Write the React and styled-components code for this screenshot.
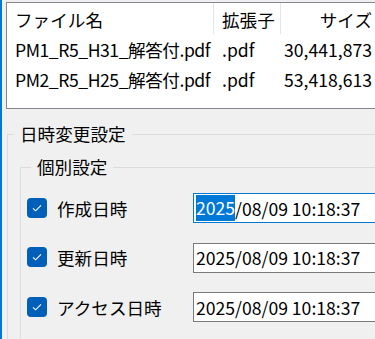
import styled, { createGlobalStyle } from 'styled-components'

const GlobalStyle = createGlobalStyle`
  html, body {
    margin: 0;
    padding: 0;
    background: #f0f0f0;
    overflow: hidden;
  }
  body {
    font-family: "Noto Sans CJK JP", "Noto Sans", sans-serif;
    font-size: 17.6px;
    color: #000;
  }
`

const Window = styled.div`
  display: flex;
  width: 375px;
  height: 339px;
  overflow: hidden;
`

const AccentEdge = styled.div`
  width: 2px;
  flex-shrink: 0;
  background: #0078d7;
`

const Main = styled.div`
  flex-shrink: 0;
  width: 430px;
  padding: 2px 0 0 4px;
`

const ListBox = styled.div`
  box-sizing: border-box;
  width: 420px;
  height: 107px;
  background: #fff;
  border: 1px solid #828790;
`

const Columns = styled.div`
  display: grid;
  grid-template-columns: 207px 67px 100px;
  height: ${p => p.$header ? 31 : 30}px;
`

const Cell = styled.div`
  display: flex;
  align-items: center;
  justify-content: ${p => p.$right ? 'flex-end' : 'flex-start'};
  padding: ${p => p.$header ? '2px' : '0'} ${p => p.$right ? '8px' : '0'} 0 8px;
  white-space: nowrap;
  letter-spacing: ${p => p.$tight ? '-0.45px' : 'normal'};
  border-right: 1px solid ${p => p.$divider ? '#e5e5e5' : 'transparent'};
`

const GroupBox = styled.fieldset`
  box-sizing: border-box;
  margin: ${p => p.$inner ? '7px 0 0 12px' : '12px 0 0 1px'};
  padding: ${p => p.$inner ? '13px 0 40px 6px' : '0'};
  width: ${p => p.$inner ? '400px' : '420px'};
  border: 1px solid #dcdcdc;
  min-width: 0;
`

const GroupTitle = styled.legend`
  margin-left: ${p => p.$inner ? '4px' : '6px'};
  padding: 0 6px;
  line-height: 26px;
`

const FieldList = styled.div`
  display: flex;
  flex-direction: column;
  gap: 19.5px;
`

const FieldRow = styled.div`
  display: flex;
  align-items: center;
  height: 30px;
`

const CheckBox = styled.span`
  box-sizing: border-box;
  width: 20px;
  height: 20px;
  border-radius: 4px;
  background: #005fb8;
  display: flex;
  align-items: center;
  justify-content: center;
  flex-shrink: 0;
  margin-top: -1px;
`

const FieldLabel = styled.span`
  width: 136px;
  padding-left: 10px;
  flex-shrink: 0;
  white-space: nowrap;
`

const DateBox = styled.div`
  box-sizing: border-box;
  width: 200px;
  height: 30px;
  padding: 0 2px;
  display: flex;
  align-items: center;
  background: #fff;
  border: 1px solid ${p => p.$focused ? '#0078d7' : '#7a7a7a'};
  white-space: nowrap;
`

const Selected = styled.span`
  background: #0078d7;
  color: #fff;
  line-height: 26px;
`

const files = [
  { name: 'PM1_R5_H31_解答付.pdf', ext: '.pdf', size: '30,441,873' },
  { name: 'PM2_R5_H25_解答付.pdf', ext: '.pdf', size: '53,418,613' },
]

const fields = ['作成日時', '更新日時', 'アクセス日時']

function Check() {
  return (
    <svg width="12" height="10" viewBox="0 0 12 10">
      <path d="M2 5.3 L4.6 7.8 L10 2.4" fill="none" stroke="#fff" strokeWidth="1.1" />
    </svg>
  )
}

export default function App() {
  return (
    <>
      <GlobalStyle />
      <Window>
        <AccentEdge />
        <Main>
          <ListBox>
            <Columns $header>
              <Cell $header $divider>ファイル名</Cell>
              <Cell $header $divider>拡張子</Cell>
              <Cell $header $right>サイズ</Cell>
            </Columns>
            {files.map(f => (
              <Columns key={f.name}>
                <Cell $tight>{f.name}</Cell>
                <Cell>{f.ext}</Cell>
                <Cell $right>{f.size}</Cell>
              </Columns>
            ))}
          </ListBox>

          <GroupBox>
            <GroupTitle>日時変更設定</GroupTitle>
            <GroupBox $inner>
              <GroupTitle $inner>個別設定</GroupTitle>
              <FieldList>
                {fields.map((label, i) => (
                  <FieldRow key={label}>
                    <CheckBox><Check /></CheckBox>
                    <FieldLabel>{label}</FieldLabel>
                    <DateBox $focused={i === 0}>
                      {i === 0 ? (
                        <><Selected>2025</Selected>/08/09 10:18:37</>
                      ) : (
                        '2025/08/09 10:18:37'
                      )}
                    </DateBox>
                  </FieldRow>
                ))}
              </FieldList>
            </GroupBox>
          </GroupBox>
        </Main>
      </Window>
    </>
  )
}
